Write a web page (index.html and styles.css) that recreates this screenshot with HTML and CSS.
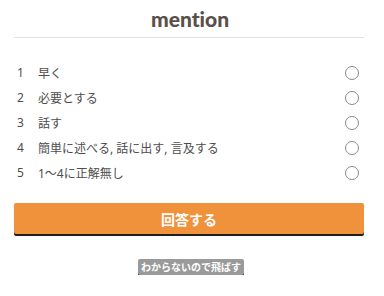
FILE: index.html
```html
<!DOCTYPE html>
<html lang="ja">
<head>
<meta charset="utf-8">
<link rel="stylesheet" href="styles.css">
</head>
<body>
<div class="page">
  <header class="title">mention</header>
  <ul class="choices">
    <li class="choice"><span class="num">1</span><span class="label">早く</span><span class="radio"></span></li>
    <li class="choice"><span class="num">2</span><span class="label">必要とする</span><span class="radio"></span></li>
    <li class="choice"><span class="num">3</span><span class="label">話す</span><span class="radio"></span></li>
    <li class="choice"><span class="num">4</span><span class="label">簡単に述べる, 話に出す, 言及する</span><span class="radio"></span></li>
    <li class="choice"><span class="num">5</span><span class="label">1〜4に正解無し</span><span class="radio"></span></li>
  </ul>
  <button class="answer">回答する</button>
  <div class="skip-row"><button class="skip">わからないので飛ばす</button></div>
</div>
</body>
</html>
```
FILE: styles.css
```css
html, body {
  margin: 0;
  padding: 0;
  background: #fff;
}
.page {
  padding: 0 20px 0 14px;
  font-family: "Noto Sans", "Noto Sans CJK JP", sans-serif;
}
.title {
  height: 37px;
  border-bottom: 1px solid #e2e2e2;
  text-align: center;
  font-family: "Lato", "Noto Sans", sans-serif;
  font-variant-ligatures: none;
  font-weight: 900;
  font-size: 21px;
  line-height: 38px;
  color: #5a4f4a;
  padding-left: 2px;
}
.choices {
  list-style: none;
  margin: 0;
  padding: 22px 0 0 0;
}
.choice {
  display: flex;
  align-items: center;
  height: 25px;
  font-size: 12px;
  color: #4d4d4d;
}
.num {
  width: 21px;
  padding-left: 3px;
}
.label {
  flex: 1;
  font-family: "Noto Sans", "Noto Sans CJK JP", sans-serif;
}
.radio {
  width: 12px;
  height: 12px;
  border: 1px solid #8a8a8a;
  border-radius: 50%;
  margin-right: 5px;
}
.answer {
  display: block;
  width: 100%;
  margin-top: 18px;
  height: 31px;
  border: none;
  border-radius: 2px;
  background: #f0913c;
  box-shadow: 0 2px 0 #1e1e1e;
  color: #fff;
  font-family: "Noto Sans CJK JP", sans-serif;
  font-weight: 700;
  font-size: 14px;
  padding: 0;
}
.skip-row {
  display: flex;
  justify-content: center;
  margin-top: 25px;
  padding-left: 4px;
}
.skip {
  height: 16px;
  padding: 0 3px;
  border: none;
  border-radius: 2px;
  background: #9a9a9a;
  box-shadow: 0 2px 0 #333;
  color: #fff;
  font-family: "Noto Sans CJK JP", sans-serif;
  font-weight: 700;
  font-size: 10px;
  line-height: 16px;
}
```
